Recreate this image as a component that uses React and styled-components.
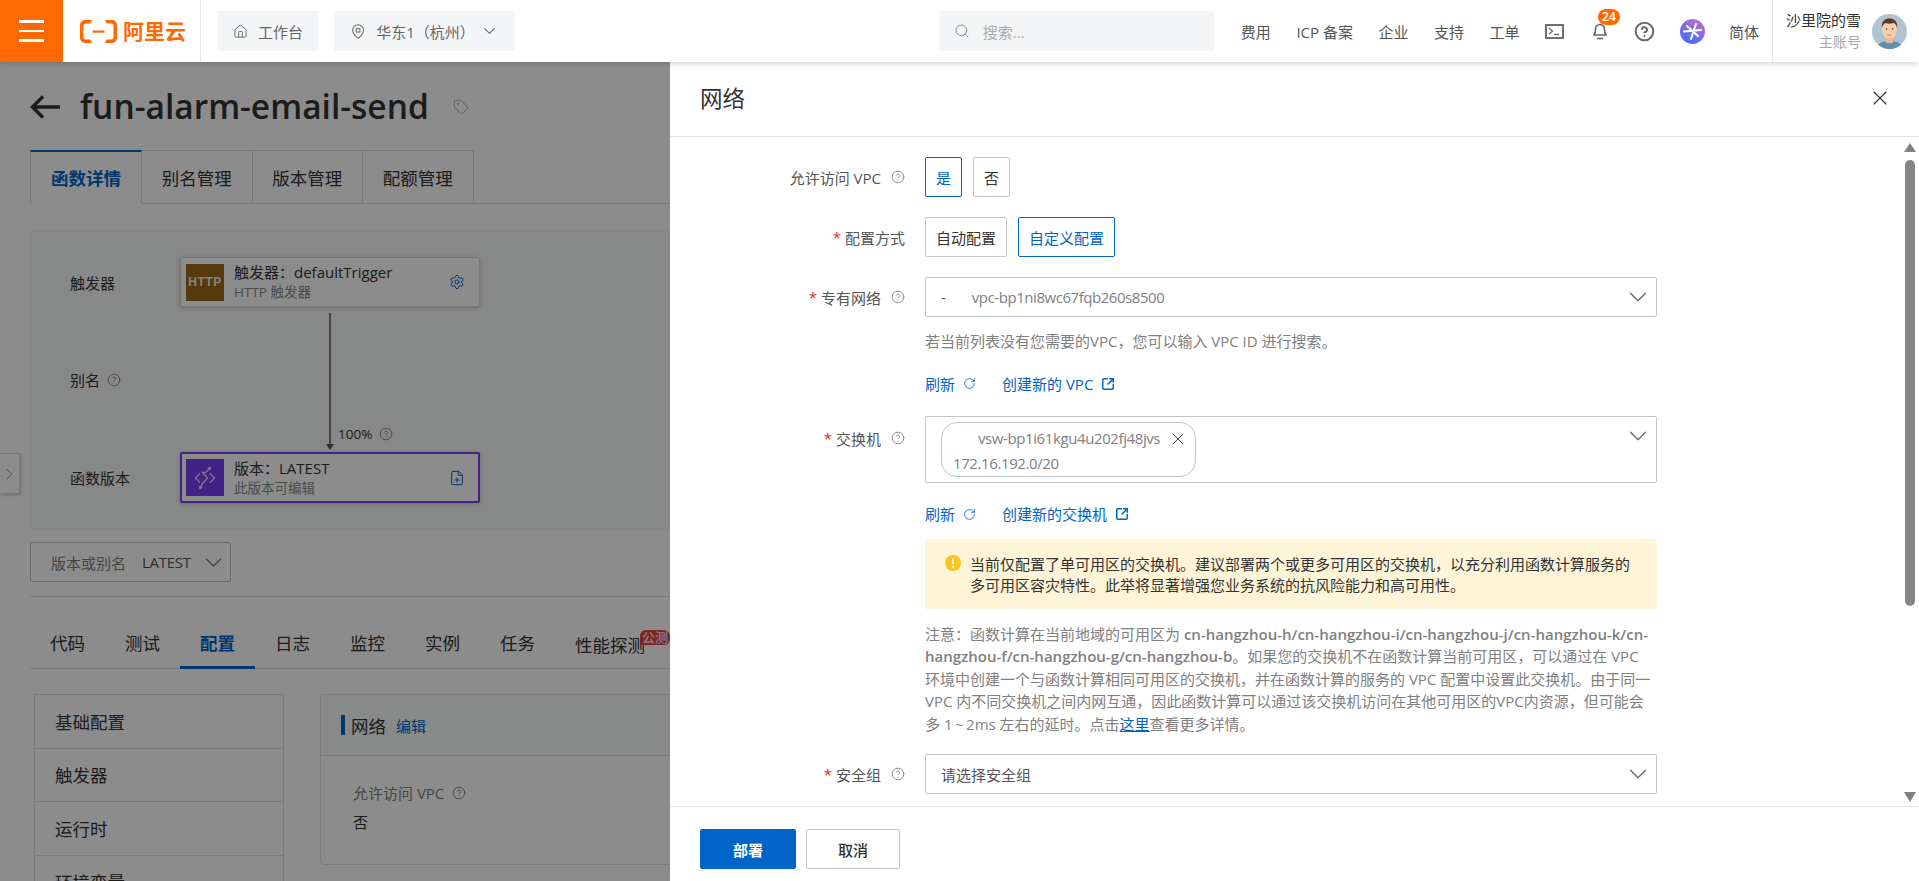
import React from 'react';
import styled, { createGlobalStyle } from 'styled-components';
import {
	ChevronDown,
	ChevronRight,
	CircleHelp,
	FilePlus,
	House,
	MapPin,
	RotateCw,
	Search,
	Settings,
	SquareArrowOutUpRight,
	Tag as TagIcon,
	X,
} from 'lucide-react';

const GlobalStyle = createGlobalStyle`
	html, body {
		margin: 0;
		padding: 0;
		background: #fff;
	}
	body {
		font-family: "Open Sans", "Noto Sans CJK SC", sans-serif;
		font-size: 15px;
		color: #333;
	}
	* {
		box-sizing: border-box;
	}
`;

const Shell = styled.div`
	width: 1919px;
	height: 881px;
	display: flex;
	flex-direction: column;
	overflow: hidden;
`;

/* top bar */
const TopBar = styled.header`
	height: 62px;
	flex: none;
	display: flex;
	align-items: center;
	background: #fff;
	box-shadow: 0 2px 6px rgba(0, 0, 0, 0.16);
	position: relative;
	z-index: 3;
`;

const Burger = styled.div`
	width: 63px;
	height: 62px;
	flex: none;
	background: #ff6a00;
	display: flex;
	flex-direction: column;
	gap: 7px;
	align-items: center;
	justify-content: center;
	span {
		width: 25px;
		height: 2.5px;
		background: #fff;
	}
`;

const Logo = styled.div`
	width: 138px;
	height: 62px;
	flex: none;
	display: flex;
	align-items: center;
	gap: 6px;
	padding-left: 17px;
	border-right: 1px solid #e8e8e8;
	color: #ff6a00;
	font-size: 21px;
	font-weight: 700;
	line-height: 1;
`;

const GrayButton = styled.div`
	height: 40px;
	display: flex;
	align-items: center;
	background: #f4f5f6;
	border-radius: 2px;
	color: #666;
	font-size: 15px;
	padding: 0 16px;
	gap: 10px;
	margin-left: ${(props) => props.$offset}px;
	width: ${(props) => props.$width}px;
`;

const SearchBox = styled(GrayButton)`
	margin-left: auto;
	color: #aaa;
	padding: 0 15px;
	gap: 13px;
`;

const NavList = styled.nav`
	display: flex;
	align-items: center;
	margin-left: 27px;
	height: 62px;
	font-size: 15px;
	color: #555;
`;

const NavItem = styled.span`
	margin-right: ${(props) => props.$gap || 25.5}px;
	display: flex;
	align-items: center;
	position: relative;
	white-space: nowrap;
`;

const Badge = styled.span`
	position: absolute;
	left: 6px;
	top: -13px;
	height: 16px;
	min-width: 22px;
	border-radius: 8px;
	background: #ff6a00;
	color: #fff;
	font-size: 12px;
	font-weight: 600;
	line-height: 16px;
	text-align: center;
`;

const UserBox = styled.div`
	width: 147px;
	height: 62px;
	flex: none;
	border-left: 1px solid #e8e8e8;
	display: flex;
	align-items: center;
	justify-content: flex-end;
	gap: 11px;
	padding-right: 12px;
`;

const UserText = styled.div`
	display: flex;
	flex-direction: column;
	align-items: flex-end;
	font-size: 15px;
	line-height: 21px;
	color: #333;
	small {
		font-size: 14px;
		color: #a6a6a6;
	}
`;

/* left page behind the mask */
const Body = styled.div`
	flex: 1;
	min-height: 0;
	display: flex;
`;

const Page = styled.main`
	width: 670px;
	flex: none;
	position: relative;
	overflow: hidden;
	padding-left: 30px;
	background: #fff;
`;

const Mask = styled.div`
	position: absolute;
	inset: 0;
	background: rgba(0, 0, 0, 0.45);
	z-index: 2;
`;

const TitleRow = styled.div`
	height: 88px;
	display: flex;
	align-items: center;
	padding-top: 2px;
`;

const Title = styled.h1`
	margin: 0 24px 0 20px;
	font-size: 33.5px;
	font-weight: 600;
	line-height: 1;
	color: #333;
	white-space: nowrap;
`;

const PageTabs = styled.div`
	display: flex;
	height: 54px;
	border-bottom: 1px solid #d9d9d9;
`;

const PageTab = styled.div`
	width: ${(props) => (props.$active ? 112 : 110.5)}px;
	display: flex;
	align-items: center;
	justify-content: center;
	font-size: 17.5px;
	border: 1px solid #d9d9d9;
	border-left-width: ${(props) => (props.$active ? 1 : 0)}px;
	border-bottom: ${(props) => (props.$active ? '1px solid #fff' : 0)};
	border-top: ${(props) => (props.$active ? '2px solid #0064c8' : '1px solid #d9d9d9')};
	color: ${(props) => (props.$active ? '#0064c8' : '#333')};
	font-weight: ${(props) => (props.$active ? 600 : 400)};
	height: ${(props) => (props.$active ? 54 : 53)}px;
`;

const Diagram = styled.section`
	margin-top: 26px;
	height: 300px;
	background: #f6f7f8;
	padding: 27px 0 0 40px;
	margin-right: -10px;
`;

const DiagramRow = styled.div`
	display: grid;
	grid-template-columns: 110px 300px;
	height: ${(props) => props.$height}px;
	align-items: center;
`;

const DiagramLabel = styled.div`
	font-size: 15px;
	display: flex;
	align-items: center;
	gap: 7px;
	color: #333;
`;

const NodeCard = styled.div`
	height: ${(props) => (props.$version ? 51 : 50)}px;
	background: #fff;
	border: ${(props) => (props.$version ? '2px solid #7b3ff2' : '1px solid #d9d9d9')};
	border-radius: 2px;
	box-shadow: 0 1px 4px rgba(0, 0, 0, 0.2);
	display: flex;
	align-items: center;
	padding: 0 ${(props) => (props.$version ? 13 : 14)}px 0 ${(props) => (props.$version ? 4 : 5)}px;
`;

const NodeIcon = styled.div`
	width: 38px;
	height: 37px;
	flex: none;
	background: ${(props) => props.$bg};
	color: #f0f0f0;
	font-family: "Liberation Sans", sans-serif;
	font-size: 12px;
	font-weight: 700;
	letter-spacing: 0.5px;
	display: flex;
	align-items: center;
	justify-content: center;
	margin-right: 10px;
`;

const NodeText = styled.div`
	flex: 1;
	font-size: 15px;
	line-height: 20px;
	color: #333;
	small {
		display: block;
		font-size: 13.5px;
		color: #888;
	}
`;

const ConnectorCell = styled.div`
	height: 100%;
	display: flex;
	padding-left: 149px;
`;

const Connector = styled.div`
	margin-top: 6px;
	height: 135px;
	width: 2px;
	background: #808080;
	position: relative;
	&:after {
		content: '';
		position: absolute;
		left: -3px;
		bottom: -2px;
		border-left: 4px solid transparent;
		border-right: 4px solid transparent;
		border-top: 6px solid #555;
	}
`;

const Percent = styled.div`
	align-self: flex-end;
	margin: 0 0 9px 7px;
	display: flex;
	align-items: center;
	gap: 7px;
	font-size: 13.5px;
	line-height: 18px;
	height: 18px;
`;

const Handle = styled.div`
	position: absolute;
	left: 0;
	top: 391px;
	width: 20px;
	height: 41px;
	background: #fff;
	border: 1px solid #d9d9d9;
	border-left: 0;
	box-shadow: 1px 1px 3px rgba(0, 0, 0, 0.2);
	display: flex;
	align-items: center;
	justify-content: center;
	color: #888;
`;

const VersionSelect = styled.div`
	margin-top: 12px;
	width: 201px;
	height: 40px;
	border: 1px solid #bfc5cb;
	border-radius: 2px;
	display: flex;
	align-items: center;
	padding: 0 2px 0 20px;
	font-size: 15px;
	color: #808080;
	span {
		margin-left: 16px;
		flex: 1;
		color: #555;
		letter-spacing: -0.3px;
	}
`;

const Rule = styled.div`
	margin-top: 14px;
	height: 1px;
	background: #e3e3e3;
`;

const SubTabs = styled.div`
	margin-top: 22px;
	height: 50px;
	display: flex;
	border-bottom: 1px solid #e0e0e0;
`;

const SubTab = styled.div`
	width: ${(props) => (props.$wide ? 90 : 75)}px;
	height: 50px;
	text-align: ${(props) => (props.$wide ? 'left' : 'center')};
	padding: ${(props) => (props.$wide ? '14px 0 0 20px' : '12px 0 0')};
	font-size: 17.5px;
	line-height: 24px;
	position: relative;
	white-space: nowrap;
	color: ${(props) => (props.$active ? '#0064c8' : '#333')};
	font-weight: ${(props) => (props.$active ? 600 : 400)};
	border-bottom: ${(props) => (props.$active ? '3px solid #0064c8' : 0)};
`;

const TestBadge = styled.span`
	position: absolute;
	left: 85px;
	top: 11px;
	width: 30px;
	height: 15px;
	background: #e54545;
	border-radius: 6px 6px 6px 0;
	color: #fff;
	font-size: 13px;
	font-weight: 400;
	line-height: 15px;
	text-align: center;
`;

const ConfigArea = styled.div`
	margin-top: 25px;
	display: flex;
	align-items: flex-start;
	padding-left: 4px;
	gap: 36px;
`;

const SideMenu = styled.ul`
	width: 250px;
	flex: none;
	margin: 0;
	padding: 0;
	list-style: none;
	border: 1px solid #e0e0e0;
`;

const SideItem = styled.li`
	height: 53.5px;
	padding-left: 20px;
	display: flex;
	align-items: center;
	font-size: 17.5px;
	border-bottom: 1px solid #e0e0e0;
	color: #333;
`;

const ConfigCard = styled.div`
	width: 640px;
	flex: none;
	height: 171px;
	border: 1px solid #e0e0e0;
	border-radius: 4px;
`;

const ConfigHead = styled.div`
	height: 61px;
	background: #f7f9fa;
	border-bottom: 1px solid #e0e0e0;
	display: flex;
	align-items: center;
	padding-left: 20px;
	font-size: 17.5px;
	border-radius: 4px 4px 0 0;
	i {
		width: 4px;
		height: 20px;
		background: #0064c8;
		margin-right: 6px;
	}
	a {
		color: #0064c8;
		font-size: 15px;
		margin-left: 10px;
	}
`;

const ConfigBody = styled.div`
	padding: 26px 0 0 32px;
	font-size: 15px;
	line-height: 22px;
	color: #333;
`;

const FieldName = styled.div`
	display: flex;
	align-items: center;
	gap: 8px;
	color: #808080;
	margin-bottom: 7px;
`;

/* right drawer */
const Drawer = styled.aside`
	flex: 1;
	display: flex;
	flex-direction: column;
	min-width: 0;
	background: #fff;
`;

const DrawerHead = styled.div`
	height: 75px;
	flex: none;
	display: flex;
	align-items: center;
	justify-content: space-between;
	padding: 0 27px 3px 30px;
	border-bottom: 1px solid #e3e3e3;
	font-size: 22.5px;
	color: #333;
`;

const DrawerBody = styled.div`
	flex: 1;
	min-height: 0;
	display: flex;
	overflow: hidden;
`;

const Form = styled.div`
	width: 1235px;
	flex: none;
	padding-top: 20px;
	display: flex;
	flex-direction: column;
	gap: 20px;
`;

const FormRow = styled.div`
	display: grid;
	grid-template-columns: 235px 732px;
	column-gap: 20px;
	margin-top: ${(props) => props.$top || 0}px;
`;

const FormLabel = styled.div`
	height: ${(props) => props.$height || 40}px;
	display: flex;
	align-items: center;
	justify-content: flex-end;
	gap: 10px;
	font-size: 15px;
	color: #555;
	white-space: nowrap;
	b {
		color: #d93026;
		font-weight: 400;
		margin-right: -6px;
	}
`;

const Toggles = styled.div`
	display: flex;
	gap: 11px;
`;

const Toggle = styled.div`
	height: 40px;
	min-width: 37px;
	padding: 0 10px;
	display: flex;
	align-items: center;
	justify-content: center;
	border: 1px solid ${(props) => (props.$on ? '#0064c8' : '#c0c6cc')};
	border-radius: 2px;
	color: ${(props) => (props.$on ? '#0064c8' : '#333')};
	font-size: 15px;
`;

const Select = styled.div`
	height: ${(props) => props.$height || 40}px;
	border: 1px solid #c0c6cc;
	border-radius: 2px;
	display: flex;
	align-items: ${(props) => (props.$top ? 'flex-start' : 'center')};
	padding: ${(props) => (props.$top ? '5px 3px 0 15px' : '0 3px 0 15px')};
	color: ${(props) => props.$color || '#808080'};
	font-size: 15px;
	> svg {
		margin-left: auto;
		flex: none;
		margin-top: ${(props) => (props.$top ? -1 : 0)}px;
		color: #666;
	}
`;

const SelectDash = styled.span`
	margin-right: 26px;
	color: #555;
`;

const Mono = styled.span`
	letter-spacing: -0.45px;
`;

const ChosenTag = styled.div`
	width: 255px;
	height: 55px;
	border: 1px solid #c0c6cc;
	border-radius: 16px;
	padding: 3px 0 0 11px;
	color: #808080;
	line-height: 25px;
	font-size: 15px;
	letter-spacing: -0.4px;
	div {
		display: flex;
		align-items: center;
		padding-left: 25px;
		gap: 8px;
	}
`;

const Hint = styled.div`
	margin-top: 13px;
	font-size: 15px;
	line-height: 22.5px;
	color: #808080;
`;

const Links = styled.div`
	margin-top: 20px;
	display: flex;
	align-items: center;
	font-size: 15px;
	line-height: 22.5px;
	color: #0064c8;
	svg {
		margin-left: 8px;
	}
`;

const LinkItem = styled.span`
	display: flex;
	align-items: center;
	margin-right: ${(props) => props.$gap || 0}px;
`;

const Warning = styled.div`
	margin-top: 13px;
	height: 70px;
	background: #fef4d7;
	border-radius: 2px;
	display: flex;
	padding: 15px 0 0 20px;
	gap: 9px;
	font-size: 15px;
	line-height: 21px;
	color: #333;
	p {
		margin: 0;
		width: 668px;
	}
	svg {
		margin-top: 1px;
		flex: none;
	}
`;

const Note = styled.div`
	margin-top: 14px;
	font-size: 15px;
	line-height: 22.5px;
	color: #808080;
	word-break: break-word;
	b {
		font-weight: 600;
	}
	a {
		color: #0064c8;
		text-decoration: underline;
	}
`;

const ScrollTrack = styled.div`
	width: 10px;
	flex: none;
	padding: 6px 0 4px;
	display: flex;
	flex-direction: column;
	align-items: center;
`;

const ScrollThumb = styled.div`
	width: 10px;
	height: 446px;
	margin-top: 8px;
	border-radius: 5px;
	background: #858585;
`;

const ScrollArrow = styled.div`
	width: 0;
	height: 0;
	border-left: 6px solid transparent;
	border-right: 6px solid transparent;
	${(props) => (props.$down
		? 'border-top: 10px solid #808080; margin-top: auto;'
		: 'border-bottom: 9px solid #808080;')}
`;

const DrawerFoot = styled.div`
	height: 75px;
	flex: none;
	border-top: 1px solid #e3e3e3;
	display: flex;
	gap: 10px;
	padding: 22px 30px 0;
`;

const FootButton = styled.div`
	width: ${(props) => (props.$primary ? 96 : 94)}px;
	height: 40px;
	display: flex;
	align-items: center;
	justify-content: center;
	font-size: 15px;
	font-weight: ${(props) => (props.$primary ? 600 : 500)};
	border-radius: 2px;
	background: ${(props) => (props.$primary ? '#0064c8' : '#fff')};
	color: ${(props) => (props.$primary ? '#fff' : '#333')};
	border: 1px solid ${(props) => (props.$primary ? '#0064c8' : '#c0c6cc')};
`;

const LogoMark = () => (
	<svg width='37' height='23' viewBox='0 0 37 23' fill='#ff6a00'>
		<path d='M12 0H5a5 5 0 0 0-5 5v13a5 5 0 0 0 5 5h7l-1.500-3.500H6a2.500 2.500 0 0 1-2.500-2.500V6A2.500 2.500 0 0 1 6 3.500h4.500z' />
		<path d='M25 0h7a5 5 0 0 1 5 5v13a5 5 0 0 1-5 5h-7l1.500-3.500H31a2.500 2.500 0 0 0 2.500-2.500V6A2.500 2.500 0 0 0 31 3.500h-4.500z' />
		<rect x='12.500' y='10.500' width='12' height='2.200' />
	</svg>
);

const SparkIcon = () => (
	<svg width='25' height='25' viewBox='0 0 25 25'>
		<defs>
			<linearGradient id='spark' x1='0.8' y1='0' x2='0.2' y2='1'>
				<stop offset='0' stopColor='#c26fc6' />
				<stop offset='1' stopColor='#3b6cff' />
			</linearGradient>
		</defs>
		<circle cx='12.5' cy='12.5' r='12.5' fill='url(#spark)' />
		<path d='M16 5 L11 20 M4 12.500 L21 11 M7 7 L18 17' stroke='#fff' strokeWidth='2' strokeLinecap='round' fill='none' />
	</svg>
);

const TerminalIcon = () => (
	<svg width='19' height='15' viewBox='0 0 19 15' fill='none' stroke='#707070'>
		<rect x='1' y='1' width='17' height='13' strokeWidth='2' />
		<path d='M4 4 L7.500 7 L4 10' strokeWidth='1.400' />
		<path d='M9 10.500h5' strokeWidth='1.400' />
	</svg>
);

const BellIcon = () => (
	<svg width='16' height='18' viewBox='0 0 16 18' fill='none' stroke='#666' strokeWidth='1.600'>
		<path d='M2 13c1-1.500 1.500-3 1.500-6a4.500 4.500 0 0 1 9 0c0 3 .5 4.500 1.500 6z' />
		<path d='M5 16.500h6' />
	</svg>
);

const BackArrow = () => (
	<svg width='30' height='24' viewBox='0 0 30 24' fill='none' stroke='#333' strokeWidth='3.500'>
		<path d='M30 12H3' />
		<path d='M13 1.500 L2.500 12 L13 22.500' />
	</svg>
);

const Avatar = () => (
	<svg width='35' height='35' viewBox='0 0 35 35'>
		<clipPath id='face'>
			<circle cx='17.5' cy='17.5' r='17.5' />
		</clipPath>
		<g clipPath='url(#face)'>
			<rect width='35' height='35' fill='#aec5d1' />
			<path d='M4 35c1-6 7-8 13.500-8S30 29 31 35z' fill='#5e8fb5' />
			<rect x='14' y='22' width='7' height='7' fill='#e8b898' />
			<ellipse cx='17.5' cy='15.5' rx='7.500' ry='9.500' fill='#f6cdb0' />
			<path d='M10 14c-1-7 3-9.500 7.500-9.500S26 7 25 14c-.5-3-2-4.500-3.500-5-2.500 1-6 1-8 0-1.500 1-3 2-3.500 5z' fill='#5b3a2c' />
			<circle cx='14.500' cy='15' r='0.800' fill='#333' />
			<circle cx='20.500' cy='15' r='0.800' fill='#333' />
			<path d='M15.500 21h4' stroke='#b5705a' strokeWidth='0.800' />
		</g>
	</svg>
);

const AlertDot = () => (
	<svg width='16' height='16' viewBox='0 0 16 16'>
		<circle cx='8' cy='8' r='8' fill='#fcc419' />
		<rect x='7' y='3' width='2' height='6.500' rx='1' fill='#fff' />
		<circle cx='8' cy='12' r='1.200' fill='#fff' />
	</svg>
);

const VersionGlyph = () => (
	<svg width='24' height='24' viewBox='0 0 24 24' fill='none' stroke='#e4dcf3' strokeWidth='1.300'>
		<path d='M7 7.500 L2.500 12 L7 16.500' />
		<path d='M17 7.500 L21.500 12 L17 16.500' />
		<path d='M16 3 L12.500 6.500 H9.500 L14.500 12 L9.500 17.500 L8 21' />
		<circle cx='16.500' cy='2.500' r='1' fill='#e4dcf3' />
		<circle cx='7.500' cy='21.500' r='1' fill='#e4dcf3' />
	</svg>
);

const Help = ({ size = 14, color = '#808080' }) => (
	<CircleHelp size={size} color={color} strokeWidth={1.5} />
);

const sideItems = ['基础配置', '触发器', '运行时', '环境变量'];
const subTabs = ['代码', '测试', '配置', '日志', '监控', '实例', '任务'];

const App = () => (
	<Shell>
		<GlobalStyle />
		<TopBar>
			<Burger>
				<span />
				<span />
				<span />
			</Burger>
			<Logo>
				<LogoMark />
				阿里云
			</Logo>
			<GrayButton $offset={16} $width={102}>
				<House size={15} strokeWidth={1.5} />
				工作台
			</GrayButton>
			<GrayButton $offset={15} $width={181}>
				<MapPin size={17} strokeWidth={1.5} />
				<span>华东1（杭州）</span>
				<ChevronDown size={20} strokeWidth={1.3} style={{ marginLeft: 'auto' }} />
			</GrayButton>
			<SearchBox $width={275}>
				<Search size={16} strokeWidth={1.5} color='#888' />
				搜索...
			</SearchBox>
			<NavList>
				<NavItem>费用</NavItem>
				<NavItem>ICP 备案</NavItem>
				<NavItem>企业</NavItem>
				<NavItem>支持</NavItem>
				<NavItem>工单</NavItem>
				<NavItem $gap={28}>
					<TerminalIcon />
				</NavItem>
				<NavItem $gap={26}>
					<BellIcon />
					<Badge>24</Badge>
				</NavItem>
				<NavItem $gap={25}>
					<CircleHelp size={21} color='#6b6b6b' strokeWidth={2.3} />
				</NavItem>
				<NavItem $gap={24}>
					<SparkIcon />
				</NavItem>
				<NavItem $gap={13}>简体</NavItem>
			</NavList>
			<UserBox>
				<UserText>
					沙里院的雪
					<small>主账号</small>
				</UserText>
				<Avatar />
			</UserBox>
		</TopBar>
		<Body>
			<Page>
				<TitleRow>
					<BackArrow />
					<Title>fun-alarm-email-send</Title>
					<TagIcon size={16} color='#aaa' strokeWidth={1.5} />
				</TitleRow>
				<PageTabs>
					<PageTab $active>函数详情</PageTab>
					<PageTab>别名管理</PageTab>
					<PageTab>版本管理</PageTab>
					<PageTab>配额管理</PageTab>
				</PageTabs>
				<Diagram>
					<DiagramRow $height={50}>
						<DiagramLabel>触发器</DiagramLabel>
						<NodeCard>
							<NodeIcon $bg='#9b6a14'>HTTP</NodeIcon>
							<NodeText>
								触发器：defaultTrigger
								<small>HTTP 触发器</small>
							</NodeText>
							<Settings size={16} color='#0064c8' strokeWidth={1.5} />
						</NodeCard>
					</DiagramRow>
					<DiagramRow $height={145}>
						<DiagramLabel>
							别名
							<Help />
						</DiagramLabel>
						<ConnectorCell>
							<Connector />
							<Percent>
								100%
								<Help />
							</Percent>
						</ConnectorCell>
					</DiagramRow>
					<DiagramRow $height={51}>
						<DiagramLabel>函数版本</DiagramLabel>
						<NodeCard $version>
							<NodeIcon $bg='#7b3ff2'>
								<VersionGlyph />
							</NodeIcon>
							<NodeText>
								版本：LATEST
								<small>此版本可编辑</small>
							</NodeText>
							<FilePlus size={16} color='#0064c8' strokeWidth={1.5} />
						</NodeCard>
					</DiagramRow>
				</Diagram>
				<VersionSelect>
					版本或别名
					<span>LATEST</span>
					<ChevronDown size={29} strokeWidth={1} color='#666' />
				</VersionSelect>
				<Rule />
				<SubTabs>
					{subTabs.map((tab) => (
						<SubTab key={tab} $active={tab === '配置'}>{tab}</SubTab>
					))}
					<SubTab $wide>
						性能探测
						<TestBadge>公测</TestBadge>
					</SubTab>
				</SubTabs>
				<ConfigArea>
					<SideMenu>
						{sideItems.map((item) => (
							<SideItem key={item}>{item}</SideItem>
						))}
					</SideMenu>
					<ConfigCard>
						<ConfigHead>
							<i />
							网络
							<a>编辑</a>
						</ConfigHead>
						<ConfigBody>
							<FieldName>
								允许访问 VPC
								<Help />
							</FieldName>
							否
						</ConfigBody>
					</ConfigCard>
				</ConfigArea>
				<Handle>
					<ChevronRight size={24} strokeWidth={1.2} />
				</Handle>
				<Mask />
			</Page>
			<Drawer>
				<DrawerHead>
					网络
					<X size={24} strokeWidth={1.1} color='#333' />
				</DrawerHead>
				<DrawerBody>
					<Form>
						<FormRow>
							<FormLabel>
								允许访问 VPC
								<Help />
							</FormLabel>
							<Toggles>
								<Toggle $on>是</Toggle>
								<Toggle>否</Toggle>
							</Toggles>
						</FormRow>
						<FormRow>
							<FormLabel>
								<b>*</b>
								配置方式
							</FormLabel>
							<Toggles>
								<Toggle>自动配置</Toggle>
								<Toggle $on>自定义配置</Toggle>
							</Toggles>
						</FormRow>
						<FormRow>
							<FormLabel>
								<b>*</b>
								专有网络
								<Help />
							</FormLabel>
							<div>
								<Select>
									<SelectDash>-</SelectDash>
									<Mono>vpc-bp1ni8wc67fqb260s8500</Mono>
									<ChevronDown size={30} strokeWidth={1} />
								</Select>
								<Hint>若当前列表没有您需要的VPC，您可以输入 VPC ID 进行搜索。</Hint>
								<Links>
									<LinkItem $gap={26}>
										刷新
										<RotateCw size={13} strokeWidth={1.5} />
									</LinkItem>
									<LinkItem>
										创建新的 VPC
										<SquareArrowOutUpRight size={14} strokeWidth={2.6} />
									</LinkItem>
								</Links>
							</div>
						</FormRow>
						<FormRow $top={1}>
							<FormLabel $height={44}>
								<b>*</b>
								交换机
								<Help />
							</FormLabel>
							<div>
								<Select $height={67} $top>
									<ChosenTag>
										<div>
											vsw-bp1i61kgu4u202fj48jvs
											<X size={20} strokeWidth={1.2} color='#444' />
										</div>
										172.16.192.0/20
									</ChosenTag>
									<ChevronDown size={30} strokeWidth={1} />
								</Select>
								<Links>
									<LinkItem $gap={26}>
										刷新
										<RotateCw size={13} strokeWidth={1.5} />
									</LinkItem>
									<LinkItem>
										创建新的交换机
										<SquareArrowOutUpRight size={14} strokeWidth={2.6} />
									</LinkItem>
								</Links>
								<Warning>
									<AlertDot />
									<p>当前仅配置了单可用区的交换机。建议部署两个或更多可用区的交换机，以充分利用函数计算服务的多可用区容灾特性。此举将显著增强您业务系统的抗风险能力和高可用性。</p>
								</Warning>
								<Note>
									注意：函数计算在当前地域的可用区为
									<b> cn-hangzhou-h/cn-hangzhou-i/cn-hangzhou-j/cn-hangzhou-k/cn-hangzhou-f/cn-hangzhou-g/cn-hangzhou-b</b>
									。如果您的交换机不在函数计算当前可用区，可以通过在 VPC 环境中创建一个与函数计算相同可用区的交换机，并在函数计算的服务的 VPC 配置中设置此交换机。由于同一 VPC 内不同交换机之间内网互通，因此函数计算可以通过该交换机访问在其他可用区的VPC内资源，但可能会多 1{'\u2009'}~{'\u2009'}2ms 左右的延时。点击
									<a>这里</a>
									查看更多详情。
								</Note>
							</div>
						</FormRow>
						<FormRow $top={-1}>
							<FormLabel>
								<b>*</b>
								安全组
								<Help />
							</FormLabel>
							<Select $color='#555'>
								请选择安全组
								<ChevronDown size={30} strokeWidth={1} />
							</Select>
						</FormRow>
					</Form>
					<ScrollTrack>
						<ScrollArrow />
						<ScrollThumb />
						<ScrollArrow $down />
					</ScrollTrack>
				</DrawerBody>
				<DrawerFoot>
					<FootButton $primary>部署</FootButton>
					<FootButton>取消</FootButton>
				</DrawerFoot>
			</Drawer>
		</Body>
	</Shell>
);

export default App;
